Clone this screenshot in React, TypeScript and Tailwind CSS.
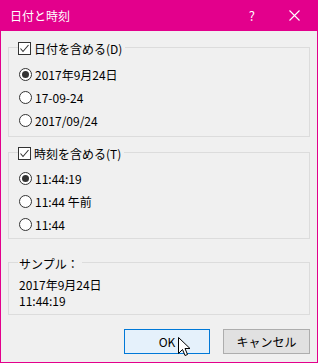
import type { ReactNode } from 'react';

const font = { fontFamily: '"Noto Sans CJK JP", "Noto Sans", sans-serif' };

function CheckBox() {
  return (
    <span className="w-[13px] h-[13px] border border-[#333333] bg-white flex items-center justify-center shrink-0">
      <svg width="11" height="11" viewBox="0 0 11 11">
        <path d="M1.5 5.5 L4 8.5 L9.5 2" fill="none" stroke="#333333" strokeWidth="1.1" />
      </svg>
    </span>
  );
}

function Radio({ checked }: { checked?: boolean }) {
  return (
    <span className="w-[13px] h-[13px] rounded-full border border-[#333333] bg-white flex items-center justify-center shrink-0">
      {checked && <span className="w-[7px] h-[7px] rounded-full bg-[#333333]" />}
    </span>
  );
}

function Group({ header, children, className }: { header: ReactNode; children: ReactNode; className?: string }) {
  return (
    <div className={'border border-[#dcdcdc] ' + (className ?? '')}>
      <div className="-mt-[7px] ml-[9px] h-[14px] w-fit pr-[3px] bg-[#f0f0f0] flex items-center gap-[3px]">
        {header}
      </div>
      {children}
    </div>
  );
}

function RadioRow({ label, checked }: { label: string; checked?: boolean }) {
  return (
    <div className="h-[23px] flex items-center gap-[3px] pl-[10px]">
      <Radio checked={checked} />
      <span>{label}</span>
    </div>
  );
}

export default function App() {
  return (
    <div
      className="w-[318px] h-[363px] bg-[#e3008c] flex flex-col text-[12px] leading-[15px] text-black"
      style={font}
    >
      {/* タイトルバー */}
      <div className="h-[31px] flex items-center text-white shrink-0">
        <span className="ml-[10px] text-[12px]">日付と時刻</span>
        <span className="ml-auto mr-[34px] text-[13px]">?</span>
        <svg width="11" height="11" viewBox="0 0 11 11" className="mr-[18px]">
          <path d="M0.5 0.5 L10.5 10.5 M10.5 0.5 L0.5 10.5" stroke="white" strokeWidth="1.1" />
        </svg>
      </div>

      <div className="flex-1 mx-[1px] mb-[1px] bg-[#f0f0f0] flex flex-col px-[7px] pt-[16px] relative">
        <Group
          header={
            <>
              <CheckBox />
              <span>日付を含める(D)</span>
            </>
          }
          className="pb-[4px]"
        >
          <div className="mt-[8px]">
            <RadioRow label="2017年9月24日" checked />
            <RadioRow label="17-09-24" />
            <RadioRow label="2017/09/24" />
          </div>
        </Group>

        <Group
          header={
            <>
              <CheckBox />
              <span>時刻を含める(T)</span>
            </>
          }
          className="mt-[15px] pb-[2px]"
        >
          <div className="mt-[7px]">
            <RadioRow label="11:44:19" checked />
            <RadioRow label="11:44 午前" />
            <RadioRow label="11:44" />
          </div>
        </Group>

        <Group header={<span className="pl-[1px]">サンプル：</span>} className="mt-[23px] pb-[5px]">
          <div className="pl-[10px] mt-[7px] leading-[16px]">
            <div>2017年9月24日</div>
            <div>11:44:19</div>
          </div>
        </Group>

        <div className="mt-auto mb-[8px] flex justify-end gap-[13px]">
          <button className="w-[86px] h-[25px] border border-[#0078d7] bg-[#e5f1fb] text-[12px]">OK</button>
          <button className="w-[87px] h-[25px] border border-[#adadad] bg-[#e1e1e1] text-[12px]">キャンセル</button>
        </div>

        {/* マウスカーソル */}
        <svg width="13" height="21" viewBox="0 0 13 21" className="absolute left-[177px] top-[306px]">
          <path
            d="M0.5 0.5 L0.5 16.5 L4.5 12.5 L7 18.5 L9.5 17.5 L7 11.5 L12 11.5 Z"
            fill="white"
            stroke="black"
            strokeWidth="1"
            strokeLinejoin="miter"
          />
        </svg>
      </div>
    </div>
  );
}
